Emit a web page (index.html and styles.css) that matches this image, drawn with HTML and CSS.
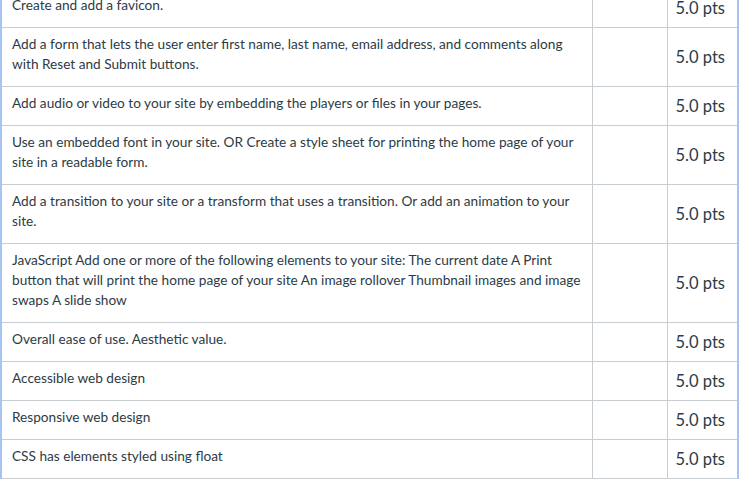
FILE: index.html
```html
<!DOCTYPE html>
<html lang="en">
<head>
<meta charset="utf-8">
<title>Rubric</title>
<link rel="stylesheet" href="styles.css">
</head>
<body>
<div class="frame">
  <div class="rubric">
    <div class="row first">
      <div class="cell desc">Create and add a favicon.</div>
      <div class="cell range"></div>
      <div class="cell pts">5.0 pts</div>
    </div>
    <div class="row">
      <div class="cell desc">Add a form that lets the user enter first name, last name, email address, and comments along with Reset and Submit buttons.</div>
      <div class="cell range"></div>
      <div class="cell pts">5.0 pts</div>
    </div>
    <div class="row">
      <div class="cell desc">Add audio or video to your site by embedding the players or files in your pages.</div>
      <div class="cell range"></div>
      <div class="cell pts">5.0 pts</div>
    </div>
    <div class="row">
      <div class="cell desc">Use an embedded font in your site. OR Create a style sheet for printing the home page of your site in a readable form.</div>
      <div class="cell range"></div>
      <div class="cell pts">5.0 pts</div>
    </div>
    <div class="row">
      <div class="cell desc">Add a transition to your site or a transform that uses a transition. Or add an animation to your site.</div>
      <div class="cell range"></div>
      <div class="cell pts">5.0 pts</div>
    </div>
    <div class="row">
      <div class="cell desc">JavaScript Add one or more of the following elements to your site: The current date A Print button that will print the home page of your site An image rollover Thumbnail images and image swaps A slide show</div>
      <div class="cell range"></div>
      <div class="cell pts">5.0 pts</div>
    </div>
    <div class="row">
      <div class="cell desc">Overall ease of use. Aesthetic value.</div>
      <div class="cell range"></div>
      <div class="cell pts">5.0 pts</div>
    </div>
    <div class="row">
      <div class="cell desc">Accessible web design</div>
      <div class="cell range"></div>
      <div class="cell pts">5.0 pts</div>
    </div>
    <div class="row">
      <div class="cell desc">Responsive web design</div>
      <div class="cell range"></div>
      <div class="cell pts">5.0 pts</div>
    </div>
    <div class="row">
      <div class="cell desc">CSS has elements styled using float</div>
      <div class="cell range"></div>
      <div class="cell pts">5.0 pts</div>
    </div>
  </div>
</div>
</body>
</html>
```
FILE: styles.css
```css
html, body {
  margin: 0;
  padding: 0;
  background: #ffffff;
}
body {
  font-family: Lato, "Open Sans", sans-serif;
  color: #2d3b45;
  overflow: hidden;
}
.frame {
  width: 739px;
  box-sizing: border-box;
  border-left: 2px solid #a7c4f0;
  border-right: 2px solid #a7c4f0;
  margin-top: -11px;
}
.rubric {
  display: flex;
  flex-direction: column;
}
.row {
  display: grid;
  grid-template-columns: 591px 75px 1fr;
  border-bottom: 1px solid #c7cdd1;
}
.cell {
  box-sizing: border-box;
  border-right: 1px solid #c7cdd1;
}
.cell.pts {
  border-right: none;
}
.desc {
  font-size: 13.65px;
  line-height: 20px;
  padding: 6px 10px 12px 10px;
}
.pts {
  font-size: 16.5px;
  display: flex;
  align-items: center;
  justify-content: flex-end;
  padding-right: 12px;
  padding-bottom: 1px;
  white-space: nowrap;
}
```
